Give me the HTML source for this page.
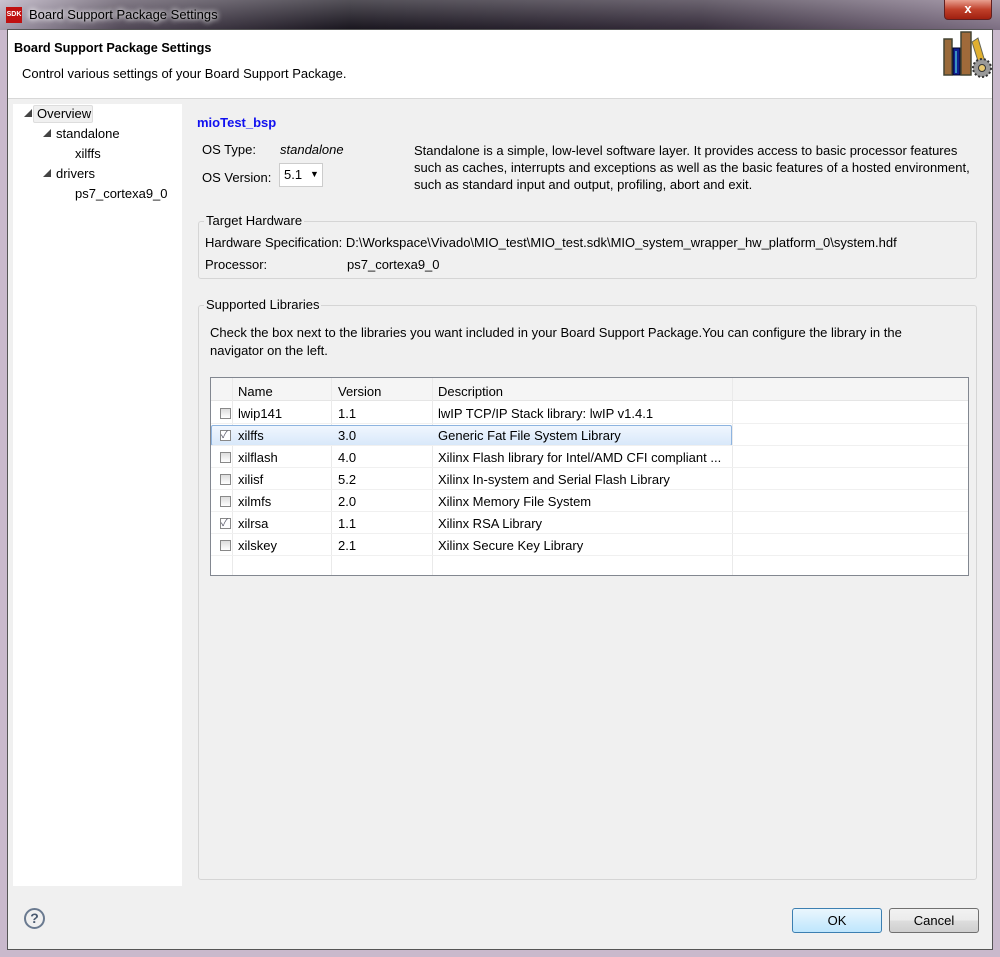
<!DOCTYPE html>
<html><head><meta charset="utf-8"><style>
*{margin:0;padding:0;box-sizing:border-box}
body{width:1000px;height:957px;position:relative;overflow:hidden;background:#c9b9cc;font-family:"Liberation Sans","Noto Sans CJK SC",sans-serif;font-size:13px;color:#000}
.abs{position:absolute}
.t{position:absolute;white-space:nowrap;font-size:13px}
</style></head><body>
<div class="abs" style="left:0;top:0;width:1000px;height:30px;background:linear-gradient(90deg,#b8aec0 0%,#5a5060 12%,#1a1620 35%,#3a3040 70%,#8a7a90 100%)"></div>
<div class="abs" style="left:0;top:0;width:1000px;height:30px;background:linear-gradient(180deg,rgba(255,255,255,.25),rgba(0,0,0,.1))"></div>
<div class="abs" style="left:6px;top:7px;width:16px;height:16px;background:#c01010;color:#fff;font-size:7px;font-weight:bold;line-height:16px;text-align:center">SDK</div>
<div class="t" style="left:29px;top:7px;font-size:13px;color:#000;text-shadow:0 0 6px #fff,0 0 6px #fff">Board Support Package Settings</div>
<div class="abs" style="left:944px;top:0;width:48px;height:20px;background:linear-gradient(#e8a090,#c0402a 50%,#a02010);border:1px solid #602020;border-top:none;border-radius:0 0 4px 4px;color:#fff;font-weight:bold;font-size:13px;text-align:center;line-height:18px">x</div>
<div class="abs" style="left:7px;top:29px;width:986px;height:921px;background:#f0f0f0;border:1px solid #555"></div>
<div class="abs" style="left:8px;top:30px;width:984px;height:69px;background:#fff;border-bottom:1px solid #d8d8d8"></div>
<div class="t" style="left:14px;top:41px;font-weight:bold;font-size:12.7px">Board Support Package Settings</div>
<div class="t" style="left:22px;top:66px">Control various settings of your Board Support Package.</div>
<svg class="abs" style="left:942px;top:30px" width="52" height="48"><rect x="2" y="9" width="8" height="36" fill="#9a6a3a" stroke="#443" stroke-width="1.5"/><rect x="11" y="18" width="7" height="27" fill="#102090" stroke="#002" stroke-width="1"/><rect x="13" y="21" width="2" height="22" fill="#3a90c0"/><rect x="19" y="2" width="10" height="43" fill="#a06a3a" stroke="#443" stroke-width="1.5"/><path d="M30 12 L36 8 L46 42 L40 44Z" fill="#e0b030" stroke="#665" stroke-width="1"/><circle cx="40" cy="38" r="9" fill="#999" stroke="#333" stroke-width="2" stroke-dasharray="2 2"/><circle cx="40" cy="38" r="3.5" fill="#e8c870" stroke="#333"/></svg>
<div class="abs" style="left:13px;top:104px;width:169px;height:782px;background:#fff"></div>
<div class="abs" style="left:33px;top:105px;width:60px;height:18px;background:#f0f0f0;border:1px solid #ddd;border-radius:2px"></div>
<div class="t" style="left:24px;top:108px;font-size:8px;color:#444">◢</div><div class="t" style="left:37px;top:106px">Overview</div>
<div class="t" style="left:43px;top:128px;font-size:8px;color:#444">◢</div><div class="t" style="left:56px;top:126px">standalone</div>
<div class="t" style="left:75px;top:146px">xilffs</div>
<div class="t" style="left:43px;top:168px;font-size:8px;color:#444">◢</div><div class="t" style="left:56px;top:166px">drivers</div>
<div class="t" style="left:75px;top:186px">ps7_cortexa9_0</div>
<div class="t" style="left:197px;top:115px;font-weight:bold;font-size:13px;color:#1010f0">mioTest_bsp</div>
<div class="t" style="left:202px;top:142px">OS Type:</div>
<div class="t" style="left:280px;top:142px;font-style:italic">standalone</div>
<div class="t" style="left:202px;top:170px">OS Version:</div>
<div class="abs" style="left:279px;top:163px;width:44px;height:24px;background:#fff;border:1px solid #ccc"></div>
<div class="t" style="left:284px;top:167px">5.1</div><div class="t" style="left:310px;top:169px;font-size:9px">▼</div>
<div class="t" style="left:414px;top:142px;line-height:17px">Standalone is a simple, low-level software layer. It provides access to basic processor features<br>such as caches, interrupts and exceptions as well as the basic features of a hosted environment,<br>such as standard input and output, profiling, abort and exit.</div>
<div class="abs" style="left:198px;top:221px;width:779px;height:58px;border:1px solid #d5d5d5;border-radius:3px"></div>
<div class="t" style="left:204px;top:213px;background:#f0f0f0;padding:0 2px">Target Hardware</div>
<div class="t" style="left:205px;top:235px">Hardware Specification: D:\Workspace\Vivado\MIO_test\MIO_test.sdk\MIO_system_wrapper_hw_platform_0\system.hdf</div>
<div class="t" style="left:205px;top:257px">Processor:</div>
<div class="t" style="left:347px;top:257px">ps7_cortexa9_0</div>
<div class="abs" style="left:198px;top:305px;width:779px;height:575px;border:1px solid #d5d5d5;border-radius:3px"></div>
<div class="t" style="left:204px;top:297px;background:#f0f0f0;padding:0 2px">Supported Libraries</div>
<div class="t" style="left:210px;top:324px;line-height:18px">Check the box next to the libraries you want included in your Board Support Package.You can configure the library in the<br>navigator on the left.</div>
<div class="abs" style="left:210px;top:377px;width:759px;height:199px;background:#fff;border:1px solid #828790"></div>
<div class="abs" style="left:211px;top:378px;width:757px;height:23px;background:#f5f5f5;border-bottom:1px solid #e5e5e5"></div>
<div class="abs" style="left:232px;top:378px;width:1px;height:197px;background:#eaeaea"></div>
<div class="abs" style="left:331px;top:378px;width:1px;height:197px;background:#eaeaea"></div>
<div class="abs" style="left:432px;top:378px;width:1px;height:197px;background:#eaeaea"></div>
<div class="abs" style="left:732px;top:378px;width:1px;height:197px;background:#eaeaea"></div>
<div class="t" style="left:238px;top:384px">Name</div>
<div class="t" style="left:338px;top:384px">Version</div>
<div class="t" style="left:438px;top:384px">Description</div>
<div class="abs" style="left:211px;top:425px;width:521px;height:21px;background:linear-gradient(#f0f6fe,#d8e8fa);border:1px solid #8eb4e0;border-radius:2px"></div>
<div style="position:absolute;left:211px;top:402px;width:757px">
<div style="height:22px;border-bottom:1px solid #f0f0f0;position:relative"><span class="abs" style="left:9px;top:6px;width:11px;height:11px;border:1px solid #888;background:linear-gradient(#ddd,#fff)"></span><span class="t" style="left:27px;top:4px">lwip141</span><span class="t" style="left:127px;top:4px">1.1</span><span class="t" style="left:227px;top:4px">lwIP TCP/IP Stack library: lwIP v1.4.1</span></div>
<div style="height:22px;border-bottom:1px solid #f0f0f0;position:relative"><span class="abs" style="left:9px;top:6px;width:11px;height:11px;border:1px solid #888;background:#fff;font-size:10px;line-height:9px;color:#556">✓</span><span class="t" style="left:27px;top:4px">xilffs</span><span class="t" style="left:127px;top:4px">3.0</span><span class="t" style="left:227px;top:4px">Generic Fat File System Library</span></div>
<div style="height:22px;border-bottom:1px solid #f0f0f0;position:relative"><span class="abs" style="left:9px;top:6px;width:11px;height:11px;border:1px solid #888;background:linear-gradient(#ddd,#fff)"></span><span class="t" style="left:27px;top:4px">xilflash</span><span class="t" style="left:127px;top:4px">4.0</span><span class="t" style="left:227px;top:4px">Xilinx Flash library for Intel/AMD CFI compliant ...</span></div>
<div style="height:22px;border-bottom:1px solid #f0f0f0;position:relative"><span class="abs" style="left:9px;top:6px;width:11px;height:11px;border:1px solid #888;background:linear-gradient(#ddd,#fff)"></span><span class="t" style="left:27px;top:4px">xilisf</span><span class="t" style="left:127px;top:4px">5.2</span><span class="t" style="left:227px;top:4px">Xilinx In-system and Serial Flash Library</span></div>
<div style="height:22px;border-bottom:1px solid #f0f0f0;position:relative"><span class="abs" style="left:9px;top:6px;width:11px;height:11px;border:1px solid #888;background:linear-gradient(#ddd,#fff)"></span><span class="t" style="left:27px;top:4px">xilmfs</span><span class="t" style="left:127px;top:4px">2.0</span><span class="t" style="left:227px;top:4px">Xilinx Memory File System</span></div>
<div style="height:22px;border-bottom:1px solid #f0f0f0;position:relative"><span class="abs" style="left:9px;top:6px;width:11px;height:11px;border:1px solid #888;background:#fff;font-size:10px;line-height:9px;color:#556">✓</span><span class="t" style="left:27px;top:4px">xilrsa</span><span class="t" style="left:127px;top:4px">1.1</span><span class="t" style="left:227px;top:4px">Xilinx RSA Library</span></div>
<div style="height:22px;border-bottom:1px solid #f0f0f0;position:relative"><span class="abs" style="left:9px;top:6px;width:11px;height:11px;border:1px solid #888;background:linear-gradient(#ddd,#fff)"></span><span class="t" style="left:27px;top:4px">xilskey</span><span class="t" style="left:127px;top:4px">2.1</span><span class="t" style="left:227px;top:4px">Xilinx Secure Key Library</span></div>
</div>
<div class="abs" style="left:24px;top:908px;width:21px;height:21px;border:2px solid #6a7a90;border-radius:50%;text-align:center;font-weight:bold;font-size:14px;line-height:17px;color:#4a5a70">?</div>
<div class="abs" style="left:792px;top:908px;width:90px;height:25px;border:1px solid #3c7fb1;border-radius:3px;background:linear-gradient(#eaf6fd,#bee6fd);text-align:center;line-height:23px">OK</div>
<div class="abs" style="left:889px;top:908px;width:90px;height:25px;border:1px solid #707070;border-radius:3px;background:linear-gradient(#f2f2f2,#ebebeb 50%,#dddddd 51%,#cfcfcf);text-align:center;line-height:23px">Cancel</div>
</body></html>
